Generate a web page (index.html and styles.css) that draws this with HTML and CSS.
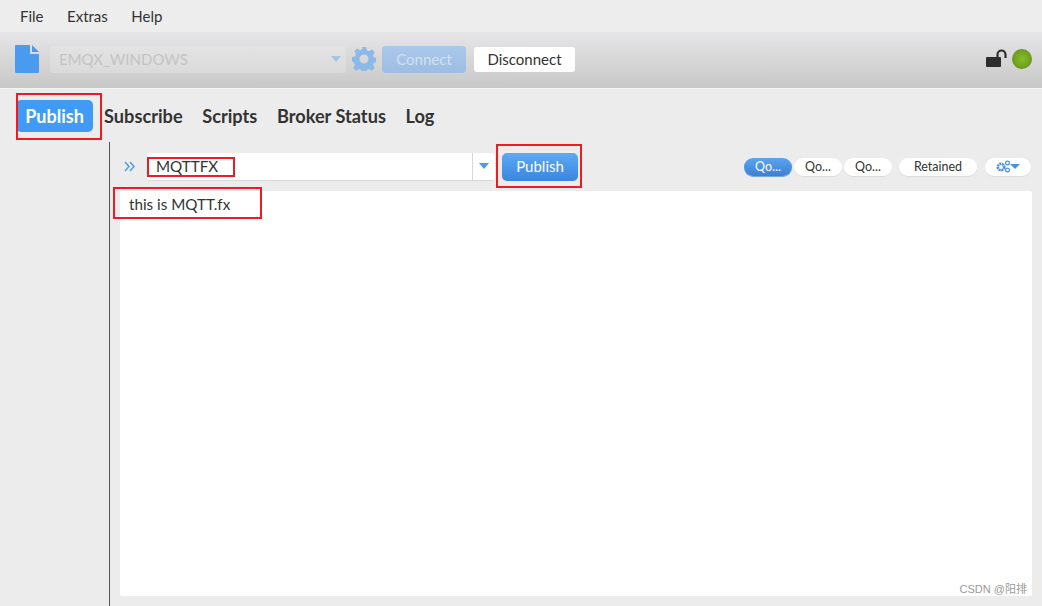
FILE: index.html
```html
<!DOCTYPE html>
<html lang="en">
<head>
<meta charset="utf-8">
<title>MQTT.fx</title>
<link rel="stylesheet" href="styles.css">
</head>
<body>
<div class="app">
  <nav class="menu">
    <span>File</span><span>Extras</span><span>Help</span>
  </nav>
  <header class="toolbar">
    <svg class="doc" width="24" height="28" viewBox="0 0 24 28"><path d="M1 0H15V9H24V26.500Q24 28 22.500 28H1.500Q0 28 0 26.500V1Q0 0 1 0Z" fill="#4a9bf0"/><path d="M17 0L24 7H17Z" fill="#4a9bf0"/></svg>
    <div class="profile">
      <span>EMQX_WINDOWS</span>
      <i class="caret caret-faded"></i>
    </div>
    <svg class="gear" width="24" height="24" viewBox="0 0 24 24"><path fill="#8ab9ea" fill-rule="evenodd" d="M10 0h4l.7 3.300 2.300 1 2.900-1.800 2.800 2.800-1.800 2.900 1 2.300 3.100.5v4l-3.100.7-1 2.300 1.800 2.900-2.800 2.800-2.900-1.800-2.300 1-.7 3.100h-4l-.7-3.100-2.300-1-2.900 1.800-2.800-2.800 1.800-2.900-1-2.300L0 14v-4l3.100-.5 1-2.300-1.800-2.900 2.800-2.800 2.900 1.800 2.300-1zM12 7.500a4.500 4.500 0 1 0 0 9 4.500 4.500 0 0 0 0-9z"/></svg>
    <button class="btn-connect">Connect</button>
    <button class="btn-disconnect">Disconnect</button>
    <div class="status">
      <svg width="22" height="20" viewBox="0 0 22 20"><path d="M11.500 9V5.500a4 4 0 0 1 8 0V9" fill="none" stroke="#2d2d2d" stroke-width="2.200"/><rect x="0" y="8" width="15" height="10" rx="1" fill="#2d2d2d"/></svg>
      <i class="led"></i>
    </div>
  </header>
  <div class="tabs">
    <span class="tab tab-active">Publish</span>
    <span class="tab">Subscribe</span>
    <span class="tab">Scripts</span>
    <span class="tab">Broker Status</span>
    <span class="tab">Log</span>
  </div>
  <div class="work">
    <aside class="rail"></aside>
    <main class="pane">
      <div class="pub-bar">
        <svg class="chev" width="11" height="11" viewBox="0 0 11 11"><path d="M1 1l4 4.500-4 4.500M6 1l4 4.500-4 4.500" fill="none" stroke="#4a9bf0" stroke-width="1.500"/></svg>
        <div class="topic">
          <span class="topic-text">MQTTFX</span>
          <span class="topic-drop"><i class="caret"></i></span>
        </div>
        <button class="btn-publish">Publish</button>
        <div class="pills">
          <span class="pill pill-on pill-qos">Qo...</span>
          <span class="pill pill-qos">Qo...</span>
          <span class="pill pill-qos">Qo...</span>
          <span class="pill pill-ret">Retained</span>
          <span class="pill pill-opt">
            <svg width="15" height="13" viewBox="0 0 15 13"><circle cx="5" cy="7" r="3.200" fill="none" stroke="#4a8fe0" stroke-width="2.600" stroke-dasharray="2 .6"/><circle cx="11.500" cy="3" r="1.900" fill="none" stroke="#4a8fe0" stroke-width="1.200"/><circle cx="11.500" cy="10" r="1.900" fill="none" stroke="#4a8fe0" stroke-width="1.200"/></svg>
            <i class="caret"></i>
          </span>
        </div>
      </div>
      <div class="message">
        <p>this is MQTT.fx</p>
        <small class="mark">CSDN @阳排</small>
      </div>
    </main>
  </div>
</div>
<div class="note note-tab"></div>
<div class="note note-topic"></div>
<div class="note note-btn"></div>
<div class="note note-msg"></div>
</body>
</html>
```
FILE: styles.css
```css
* { box-sizing: border-box; }
html, body { margin: 0; height: 100%; overflow: hidden; }
body { font-family: Lato, sans-serif; background: #ececec; color: #333; position: relative; }
button { font-family: inherit; border: 0; padding: 0; }
i { display: block; }

.app { display: flex; flex-direction: column; height: 606px; }

.menu { height: 32px; flex: none; display: flex; align-items: center; gap: 23.500px; padding-left: 20px; font-size: 15px; color: #333; background: #ededed; }

.toolbar { height: 57px; flex: none; display: flex; align-items: center; padding: 0 10px 2px 15px; background: linear-gradient(#e6e5e7, #c8c8c8); border-bottom: 1px solid #f4f4f4; }
.doc { flex: none; margin-right: 11px; }
.profile { width: 296px; height: 27px; border-radius: 3px; background: linear-gradient(#e3e3e4, #dadadb); display: flex; align-items: center; justify-content: space-between; padding: 0 5px 0 9px; font-size: 15px; color: #c4c4c4; }
.caret { width: 0; height: 0; border-left: 5.500px solid transparent; border-right: 5.500px solid transparent; border-top: 6px solid #4a9bf0; }
.caret-faded { border-top-color: #a6c4e6; }
.gear { flex: none; margin: 0 6px; }
.btn-connect { width: 84px; height: 27px; border-radius: 4px; background: linear-gradient(#aac8ea, #9dbde3); color: #d3dfee; font-size: 15px; }
.btn-disconnect { width: 101px; height: 25px; border-radius: 3px; background: #fff; color: #333; font-size: 15px; margin-left: 8px; }
.status { margin-left: auto; display: flex; align-items: center; gap: 4px; }
.led { width: 20px; height: 20px; border-radius: 50%; background: radial-gradient(circle, #84bd28 0%, #72a321 55%, #527a1e 100%); }

.tabs { height: 53px; flex: none; display: flex; align-items: center; padding: 0 0 0 16px; font-size: 18.200px; font-weight: 700; color: #333; }
.tab { margin-right: 19.600px; }
.tab-active { width: 77px; height: 32px; margin-right: 11px; border-radius: 5px; background: #3f9bf5; color: #fff; font-size: 18px; display: flex; align-items: center; justify-content: center; }

.work { flex: 1; display: flex; min-height: 0; }
.rail { width: 110px; flex: none; border-right: 1px solid #555; }
.pane { flex: 1; min-width: 0; display: flex; flex-direction: column; padding: 0 10px 10px 10px; }

.pub-bar { height: 49px; flex: none; display: flex; align-items: center; }
.chev { flex: none; margin: 0 12px 0 4px; }
.topic { width: 348px; height: 28px; background: #fff; border-radius: 3px; border-bottom: 1px solid #d8d8d8; display: flex; align-items: center; justify-content: space-between; font-size: 15.200px; color: #333; }
.topic-text { padding-left: 9px; }
.topic-drop { width: 23px; height: 100%; border-left: 1px solid #d8d8d8; display: flex; align-items: center; justify-content: center; }
.btn-publish { width: 76px; height: 28px; margin-left: 7px; padding-bottom: 2px; border-radius: 5px; background: linear-gradient(#5ca9f4, #3a85de); color: #fff; font-size: 15px; }

.pills { margin-left: auto; display: flex; align-items: center; margin-right: 1px; }
.pill { height: 18px; border-radius: 9px; background: #fff; box-shadow: 0 1px 0 #dcdcdc; display: flex; align-items: center; justify-content: center; font-size: 12.500px; color: #333; }
.pill-qos { width: 48px; margin-right: 2px; }
.pill-on { background: linear-gradient(#5ca5ef, #3b80d6); box-shadow: 0 1px 0 #7aa6da; color: #fff; }
.pill-ret { width: 78px; margin-left: 5px; }
.pill-opt { width: 46px; margin-left: 8px; }
.pill-opt .caret { border-left-width: 5px; border-right-width: 5px; border-top-width: 5px; border-top-color: #4a8fe0; margin-left: -1px; }

.message { flex: 1; background: #fff; border-radius: 2px; position: relative; padding: 4px 9px; font-size: 15.200px; color: #333; }
.message p { margin: 0; }
.mark { position: absolute; right: 5px; bottom: 0; font-family: "Liberation Sans", "Noto Sans CJK SC", sans-serif; font-size: 11px; color: #999; }

.note { position: absolute; border: 2px solid #ed1c24; pointer-events: none; }
.note-tab { left: 16px; top: 93px; width: 86px; height: 47px; }
.note-topic { left: 147px; top: 157px; width: 88px; height: 20px; }
.note-btn { left: 496px; top: 144px; width: 86px; height: 44px; }
.note-msg { left: 113px; top: 187px; width: 149px; height: 32px; }
```
